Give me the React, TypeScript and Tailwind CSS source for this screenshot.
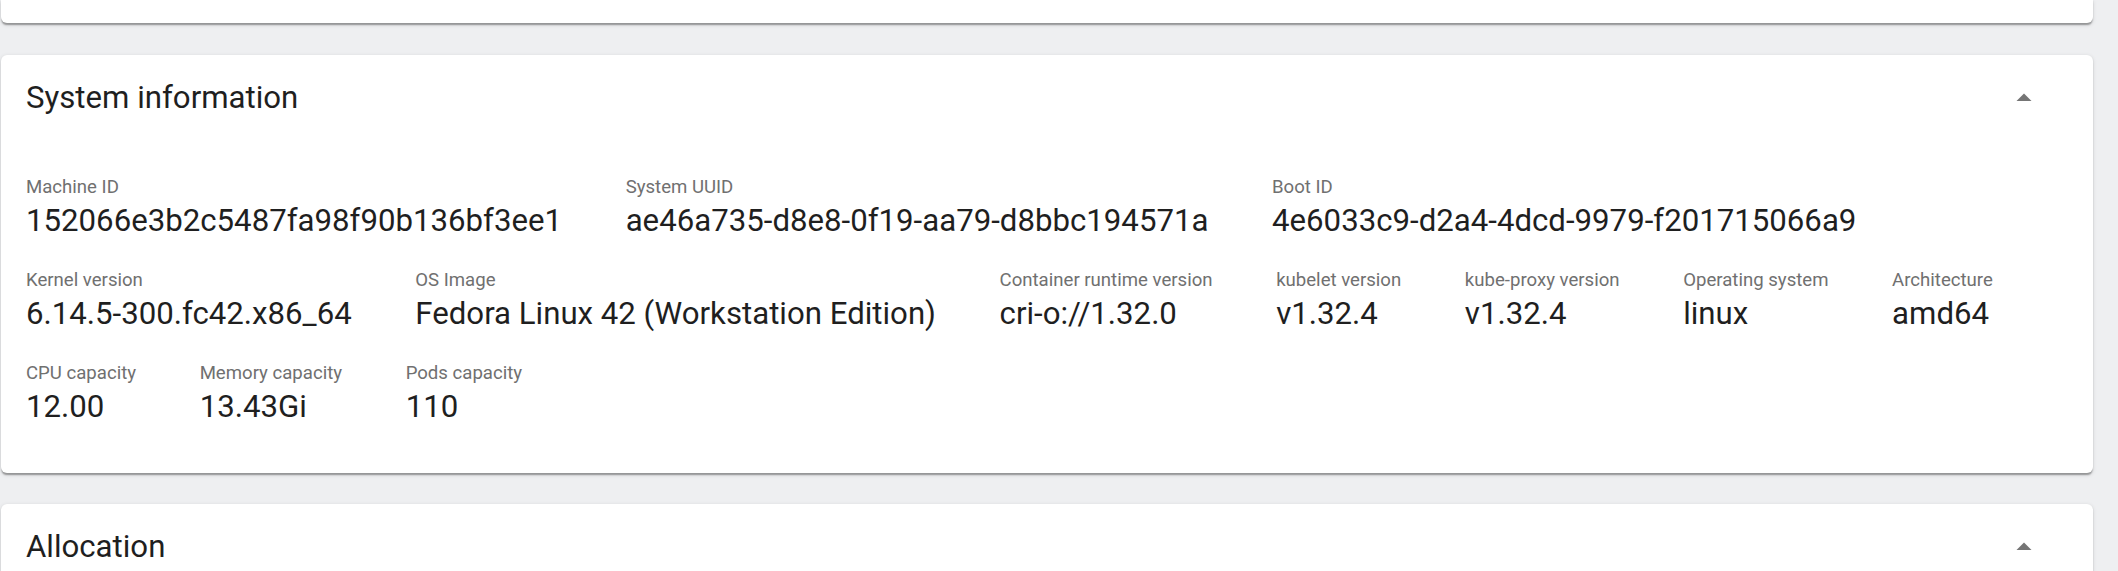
import React from "react";

type Item = { label: string; value: string };

const rows: Item[][] = [
  [
    { label: "Machine ID", value: "152066e3b2c5487fa98f90b136bf3ee1" },
    { label: "System UUID", value: "ae46a735-d8e8-0f19-aa79-d8bbc194571a" },
    { label: "Boot ID", value: "4e6033c9-d2a4-4dcd-9979-f201715066a9" },
  ],
  [
    { label: "Kernel version", value: "6.14.5-300.fc42.x86_64" },
    { label: "OS Image", value: "Fedora Linux 42 (Workstation Edition)" },
    { label: "Container runtime version", value: "cri-o://1.32.0" },
    { label: "kubelet version", value: "v1.32.4" },
    { label: "kube-proxy version", value: "v1.32.4" },
    { label: "Operating system", value: "linux" },
    { label: "Architecture", value: "amd64" },
  ],
  [
    { label: "CPU capacity", value: "12.00" },
    { label: "Memory capacity", value: "13.43Gi" },
    { label: "Pods capacity", value: "110" },
  ],
];

function ArrowUp() {
  return (
    <svg width="36" height="36" viewBox="0 0 24 24" aria-hidden="true">
      <path d="M7 14l5-5 5 5z" fill="#757575" />
    </svg>
  );
}

function Header({ title }: { title: string }) {
  return (
    <div className="flex h-[86px] items-center justify-between pl-[25px] pr-[51px]">
      <h2 className="text-[31.2px] leading-[44px] font-normal text-[#1f1f1f]">{title}</h2>
      <ArrowUp />
    </div>
  );
}

const cardShadow =
  "shadow-[0_3px_1.5px_-1.5px_rgba(0,0,0,0.2),0_1.5px_1.5px_0_rgba(0,0,0,0.14),0_1.5px_4.5px_0_rgba(0,0,0,0.12)]";

export default function App() {
  return (
    <div className="h-screen overflow-hidden bg-[#eeeff1] pl-px pr-[25px] font-[Roboto,'Liberation_Sans',sans-serif]">
      <div className="flex flex-col gap-[31.5px]">
        <div className={`h-[23px] rounded-b-[6px] bg-white ${cardShadow}`} />
        <section className={`rounded-[6px] bg-white pb-[47px] ${cardShadow}`}>
          <Header title="System information" />
          <div className="mt-[33px] flex flex-col gap-y-[27px] px-[25px]">
            {rows.map((row, i) => (
              <div key={i} className="flex gap-x-[63.6px]">
                {row.map((it) => (
                  <div key={it.label} className="flex flex-col">
                    <span className="whitespace-nowrap text-[18.6px] leading-[27px] text-[#707070]">{it.label}</span>
                    <span className="whitespace-nowrap text-[31.2px] leading-[39px] text-[#1f1f1f]">{it.value}</span>
                  </div>
                ))}
              </div>
            ))}
          </div>
        </section>
        <section className={`h-[200px] rounded-[6px] bg-white ${cardShadow}`}>
          <Header title="Allocation" />
        </section>
      </div>
    </div>
  );
}
